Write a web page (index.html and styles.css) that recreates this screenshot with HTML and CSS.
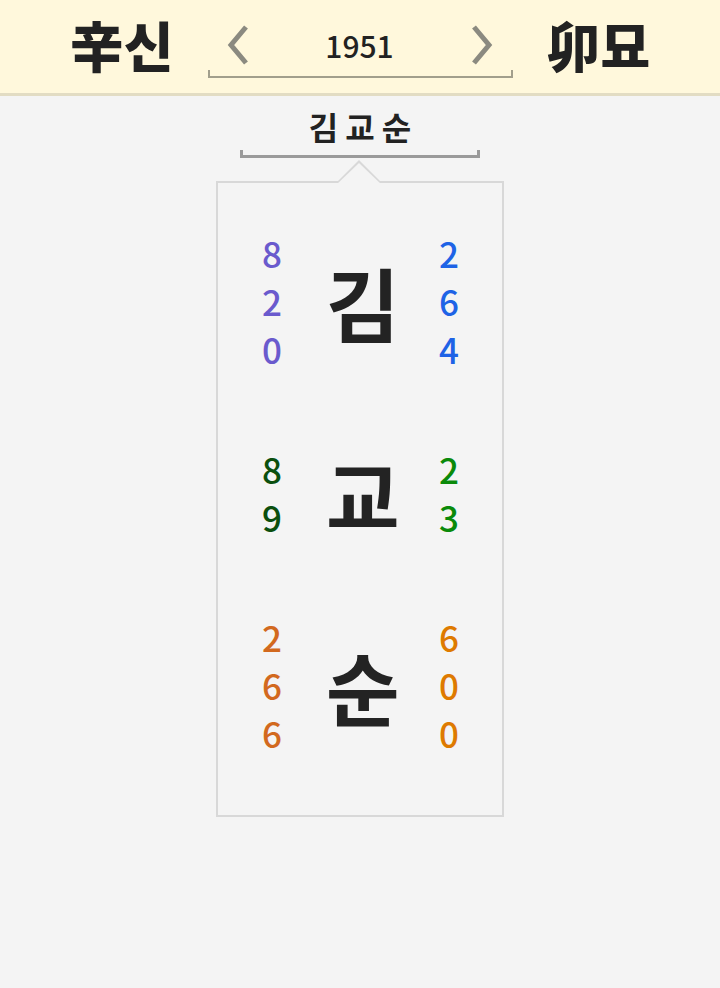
FILE: index.html
```html
<!DOCTYPE html>
<html lang="ko">
<head>
<meta charset="utf-8">
<title>김교순</title>
<link rel="stylesheet" href="styles.css">
</head>
<body>
<header class="topbar">
  <div class="ganji">辛신</div>
  <div class="year-nav">
    <div class="year-row">
      <svg class="chev" viewBox="0 0 24 42" width="24" height="42"><polyline points="20,3 5,21 20,39" fill="none" stroke="#8b8a80" stroke-width="5" stroke-linejoin="miter"/></svg>
      <span class="year">1951</span>
      <svg class="chev" viewBox="0 0 24 42" width="24" height="42"><polyline points="4,3 19,21 4,39" fill="none" stroke="#8b8a80" stroke-width="5" stroke-linejoin="miter"/></svg>
    </div>
    <div class="year-bracket"></div>
  </div>
  <div class="ganji">卯묘</div>
</header>

<main class="content">
  <div class="name">김교순</div>
  <div class="name-bracket"></div>

  <section class="card">
    <div class="row">
      <div class="nums purple"><span>8</span><span>2</span><span>0</span></div>
      <div class="glyph">김</div>
      <div class="nums blue"><span>2</span><span>6</span><span>4</span></div>
    </div>
    <div class="row">
      <div class="nums dgreen"><span>8</span><span>9</span></div>
      <div class="glyph">교</div>
      <div class="nums green"><span>2</span><span>3</span></div>
    </div>
    <div class="row">
      <div class="nums brown"><span>2</span><span>6</span><span>6</span></div>
      <div class="glyph">순</div>
      <div class="nums orange"><span>6</span><span>0</span><span>0</span></div>
    </div>
  </section>
</main>
</body>
</html>
```

FILE: styles.css
```css
html, body {
  margin: 0;
  padding: 0;
}
body {
  background: #f4f4f4;
  font-family: "Noto Sans CJK KR", "Noto Sans", sans-serif;
  color: #222;
  width: 720px;
  height: 988px;
  overflow: hidden;
}

.topbar {
  height: 93px;
  background: #fff8dc;
  border-bottom: 3px solid #e2dcc3;
  display: flex;
  align-items: center;
  justify-content: center;
  gap: 34px;
}
.ganji {
  font-size: 54px;
  font-weight: 900;
  line-height: 1;
  color: #222;
  letter-spacing: 0;
  margin-top: -4px;
}
.year-nav {
  width: 305px;
  display: flex;
  flex-direction: column;
  align-items: stretch;
  margin-top: 6px;
}
.year-row {
  display: flex;
  align-items: center;
  justify-content: space-between;
  padding: 0 19px 0 18px;
  height: 46px;
}
.year {
  font-size: 30px;
  font-weight: 500;
  color: #222;
  line-height: 1;
}
.year-bracket {
  height: 6px;
  border: 2px solid #a29f8c;
  border-top: none;
  margin-top: 2px;
}

.content {
  display: flex;
  flex-direction: column;
  align-items: center;
}
.name {
  margin-top: 10px;
  font-size: 32px;
  font-weight: 700;
  line-height: 40px;
  letter-spacing: 7px;
  margin-right: -7px;
  color: #222;
}
.name-bracket {
  width: 234px;
  height: 5px;
  border: 3px solid #9a9a9a;
  border-top: none;
  margin-top: 4px;
}

.card {
  position: relative;
  margin-top: 23px;
  border: 2px solid #d8d8d8;
  padding-top: 46px;
  box-sizing: border-box;
  height: 636px;
  width: 288px;
  display: flex;
  flex-direction: column;
  gap: 72px;
}
.card::before,
.card::after {
  content: "";
  position: absolute;
  left: 118px;
  width: 0;
  height: 0;
  border-left: 23px solid transparent;
  border-right: 23px solid transparent;
}
.card::before {
  top: -23px;
  border-bottom: 23px solid #d8d8d8;
}
.card::after {
  top: -20px;
  border-bottom: 22px solid #f4f4f4;
}

.row {
  display: grid;
  grid-template-columns: 108px 70px 106px;
  align-items: center;
}
.nums {
  display: flex;
  flex-direction: column;
  align-items: center;
  font-size: 35px;
  font-weight: 500;
  line-height: 48px;
}
.glyph {
  text-align: center;
  font-size: 80px;
  font-weight: 700;
  line-height: 1;
  color: #232323;
  white-space: nowrap;
}
.purple { color: #6a5acd; }
.blue { color: #1e63e6; }
.dgreen { color: #0b4f0e; }
.green { color: #0a8a0a; }
.brown { color: #d2691e; }
.orange { color: #de7a00; }
```
